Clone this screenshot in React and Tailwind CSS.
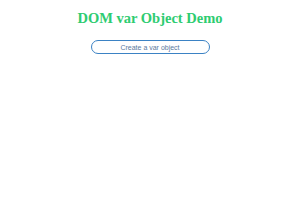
export default function App() {
  return (
    <div className="w-[300px] h-[210px] bg-white flex flex-col items-center">
      <h1 className="mt-[9px] text-[14.5px] font-bold leading-[18px] text-[#2ecc71] font-['Liberation_Serif',serif]">
        DOM var Object Demo
      </h1>
      <button className="mt-[13px] w-[119px] h-[14px] rounded-full border-[1.5px] border-[#3b82c4] bg-white text-[7px] leading-none text-[#5a7aa0] font-['Liberation_Sans',sans-serif]">
        Create a var object
      </button>
    </div>
  );
}
